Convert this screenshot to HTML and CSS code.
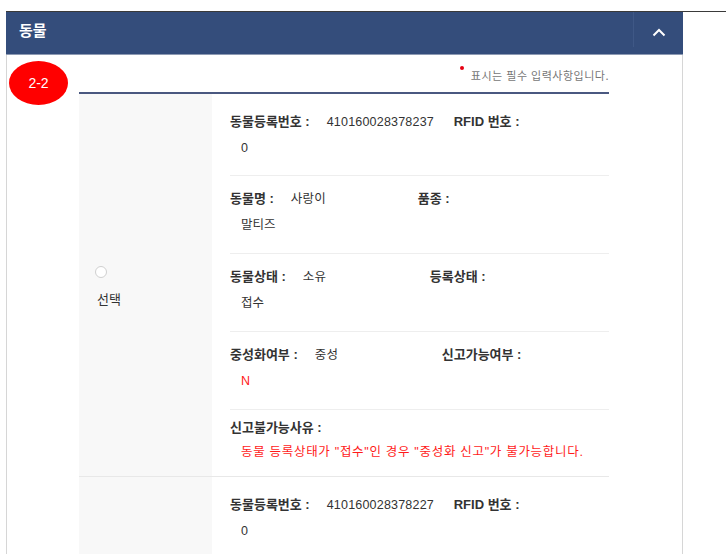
FILE: index.html
```html
<!DOCTYPE html>
<html lang="ko">
<head>
<meta charset="utf-8">
<link rel="stylesheet" href="styles.css">
</head>
<body>
<div class="topline"></div>
<div class="panel">
  <div class="head">
    <h2 class="title">동물</h2>
    <div class="toggle">
      <svg width="14" height="9" viewBox="0 0 14 9"><path d="M1.5 7.5 L7 2 L12.5 7.5" fill="none" stroke="#fff" stroke-width="2"/></svg>
    </div>
  </div>
  <div class="body">
    <div class="badge">2-2</div>
    <div class="content">
      <p class="req"><span class="dot"></span>표시는 필수 입력사항입니다.</p>
      <div class="table">
        <div class="record">
          <div class="sel">
            <span class="radio"></span>
            <span class="sel-txt">선택</span>
          </div>
          <div class="fields">
            <div class="row first">
              <div class="l1"><span class="lab">동물등록번호 :</span><span class="val">410160028378237</span><span class="lab">RFID 번호 :</span></div>
              <div class="l2">0</div>
            </div>
            <div class="row">
              <div class="l1"><span class="lab">동물명 :</span><span class="val">사랑이</span><span class="lab">품종 :</span></div>
              <div class="l2">말티즈</div>
            </div>
            <div class="row">
              <div class="l1"><span class="lab">동물상태 :</span><span class="val">소유</span><span class="lab">등록상태 :</span></div>
              <div class="l2">접수</div>
            </div>
            <div class="row">
              <div class="l1"><span class="lab">중성화여부 :</span><span class="val">중성</span><span class="lab">신고가능여부 :</span></div>
              <div class="l2 red">N</div>
            </div>
            <div class="row last">
              <div class="l1"><span class="lab">신고불가능사유 :</span></div>
              <div class="l2 red msg">동물 등록상태가 "접수"인 경우 "중성화 신고"가 불가능합니다.</div>
            </div>
          </div>
        </div>
        <div class="record">
          <div class="sel"></div>
          <div class="fields">
            <div class="row first">
              <div class="l1"><span class="lab">동물등록번호 :</span><span class="val">410160028378227</span><span class="lab">RFID 번호 :</span></div>
              <div class="l2">0</div>
            </div>
          </div>
        </div>
      </div>
    </div>
  </div>
</div>
</body>
</html>
```
FILE: styles.css
```css
* { box-sizing: border-box; }
html, body { margin: 0; padding: 0; background: #fff; overflow: hidden; }
body {
  font-family: "Liberation Sans", "Noto Sans CJK KR", sans-serif;
  color: #333;
  font-size: 13px;
  height: 554px;
}
.topline {
  margin: 11px 0 0 6px;
  border-top: 1px solid #3a3a3a;
}
.panel {
  width: 677px;
  margin-left: 6px;
}
.head {
  height: 43px;
  background: #344d7b;
  display: flex;
  align-items: stretch;
  justify-content: space-between;
  border-bottom: 1px solid #8d9ab3;
}
.title {
  margin: 0;
  padding-left: 13px;
  color: #fff;
  font-size: 15px;
  font-weight: bold;
  line-height: 36px;
  font-family: "Noto Sans CJK KR", sans-serif;
}
.toggle {
  width: 50px;
  margin-bottom: 7px;
  border-left: 1px solid #3f5886;
  display: flex;
  align-items: center;
  justify-content: center;
  padding-top: 5px;
}
.body {
  border-left: 1px solid #d6d6d6;
  border-right: 1px solid #d6d6d6;
  height: 499px;
  overflow: hidden;
  position: relative;
  padding-left: 72px;
}
.badge {
  position: absolute;
  left: 2px;
  top: 6px;
  width: 59px;
  height: 44px;
  border-radius: 50%;
  background: #ff0000;
  color: #fff;
  font-size: 14px;
  display: flex;
  align-items: center;
  justify-content: center;
  font-family: "Liberation Sans", sans-serif;
}
.content {
  width: 530px;
}
.req {
  margin: 0;
  height: 37px;
  text-align: right;
  font-size: 11px;
  color: #777;
  padding-top: 12px;
  font-family: "Noto Sans CJK KR", sans-serif;
  letter-spacing: 0.5px;
}
.dot {
  display: inline-block;
  width: 4px;
  height: 4px;
  border-radius: 50%;
  background: #e60012;
  vertical-align: top;
  margin-top: -1px;
  margin-right: 7px;
}
.table {
  border-top: 2px solid #4a5880;
}
.record {
  display: flex;
  border-bottom: 1px solid #e8e8e8;
}
.sel {
  width: 133px;
  background: #f8f8f8;
  display: flex;
  flex-direction: column;
  justify-content: center;
  padding-left: 18px;
  padding-top: 4px;
}
.radio {
  width: 12px;
  height: 12px;
  border: 1px solid #d0d0d0;
  border-radius: 50%;
  background: #fff;
  margin-left: -2px;
}
.sel-txt {
  margin-top: 11px;
  font-family: "Noto Sans CJK KR", sans-serif;
  font-size: 13px;
}
.fields {
  flex: 1;
  padding-left: 18px;
}
.row {
  padding: 9px 0 14px;
  border-bottom: 1px solid #eeeeee;
}
.row.first { padding-top: 14px; padding-bottom: 13px; }
.row.last { border-bottom: none; padding: 6px 0 12px; }
.l1, .l2 {
  height: 27px;
  line-height: 27px;
  white-space: nowrap;
}
.row.last .l1, .row.last .l2 { height: 24px; line-height: 24px; }
.lab {
  font-weight: bold;
  font-size: 13px;
  color: #333;
  margin-right: 17px;
}
.val {
  display: inline-block;
  width: 127px;
  font-size: 12.5px;
  letter-spacing: 0.2px;
}
.l2 {
  padding-left: 11px;
  font-size: 12.5px;
}
.red { color: #ff1a1a; }
.msg { letter-spacing: 0.7px; }
```
